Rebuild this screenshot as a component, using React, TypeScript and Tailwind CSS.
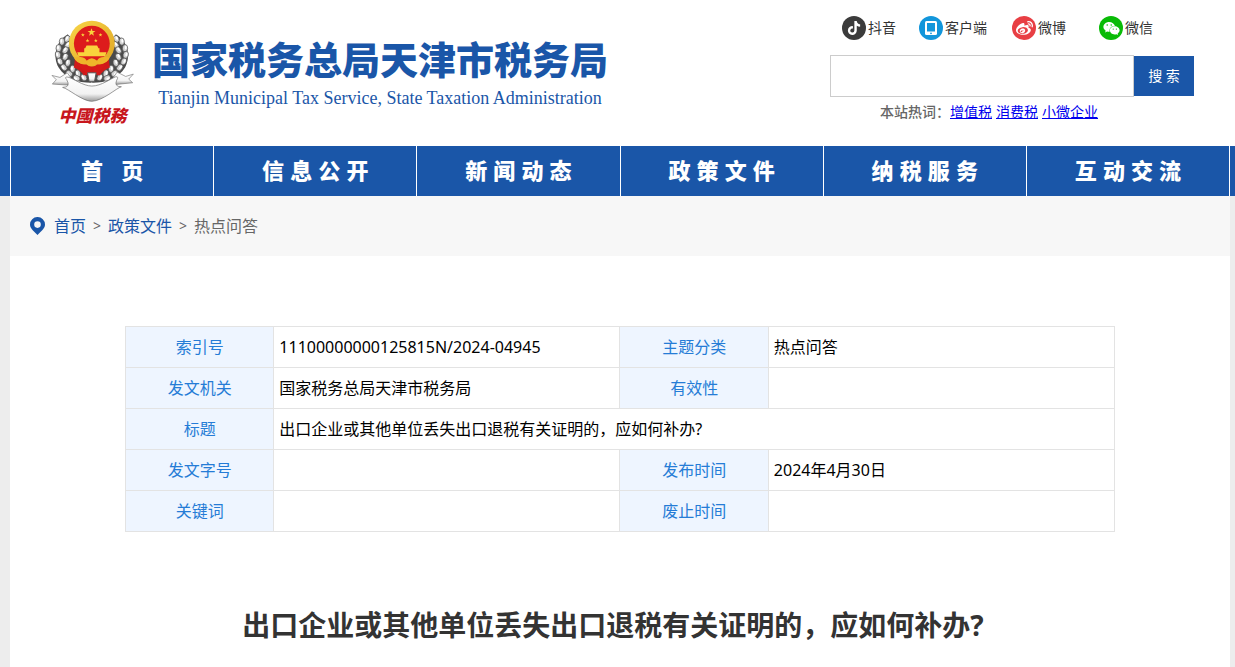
import type { ReactNode } from "react";
import { FaTiktok, FaWeibo, FaWeixin } from "react-icons/fa";

const NAV = ["首   页", "信 息 公 开", "新 闻 动 态", "政 策 文 件", "纳 税 服 务", "互 动 交 流"];

const HOT_WORDS = ["增值税", "消费税", "小微企业"];

function TabletIcon() {
    return (
        <svg viewBox="0 0 24 24" className="h-6 w-6" aria-hidden="true">
            <rect x="6" y="5" width="12" height="14" rx="1.5" fill="#fff" />
            <rect x="8" y="7" width="8" height="8.5" fill="#1296db" />
            <circle cx="12" cy="17.3" r="0.9" fill="#1296db" />
        </svg>
    );
}

function PinIcon() {
    return (
        <svg viewBox="0 0 15 18" className="h-[18px] w-[15px]" aria-hidden="true">
            <path
                fillRule="evenodd"
                d="M7.5 0A7.4 7.4 0 0 0 0 7.4C0 11 2.6 12.9 7.5 18 12.4 12.9 15 11 15 7.4A7.4 7.4 0 0 0 7.5 0ZM7.5 4.3A3.3 3.3 0 1 1 7.5 10.9 3.3 3.3 0 0 1 7.5 4.3Z"
                fill="#1a56a8"
            />
        </svg>
    );
}

const SOCIALS: { name: string; bg: string; icon: ReactNode }[] = [
    { name: "抖音", bg: "bg-[#3b3b3b]", icon: <FaTiktok className="h-3.5 w-3.5" /> },
    { name: "客户端", bg: "bg-[#1296db]", icon: <TabletIcon /> },
    { name: "微博", bg: "bg-[#e83f44]", icon: <FaWeibo className="h-[17px] w-[17px]" /> },
    { name: "微信", bg: "bg-[#09bb07]", icon: <FaWeixin className="h-[17px] w-[17px]" /> },
];

const STAR = "M0-10 2.4-3.2 9.5-3.1 3.8 1.2 5.9 8.1 0 4 -5.9 8.1 -3.8 1.2 -9.5-3.1 -2.4-3.2Z";

// leaves of the left half of the wreath: x, y, angle
const LEAVES = [
    [82, 90, 25], [66, 98, 5], [84, 108, 40], [56, 118, 0], [76, 124, 35], [54, 138, -12],
    [76, 144, 25], [60, 158, -25], [84, 162, 15], [72, 176, -38], [98, 180, 0], [88, 194, -50],
    [114, 194, -15], [110, 208, -60], [132, 206, -30],
];

function Wreath() {
    return (
        <g>
            <path d="M84 76C50 94 36 140 56 176C76 208 112 222 155 222V160L100 130Z" fill="#4a4a4a" />
            {LEAVES.map(([x, y, a]) => (
                <g key={`${x}-${y}`} transform={`translate(${x} ${y}) rotate(${a})`}>
                    <ellipse rx="8" ry="11" fill="#d2d2d2" stroke="#4a4a4a" strokeWidth="2" />
                    <ellipse cx="-2" cy="-2" rx="3" ry="6" fill="#fff" />
                </g>
            ))}
        </g>
    );
}

function Emblem() {
    return (
        <svg viewBox="33 33 250 250" className="h-[83px] w-[83px]" role="img" aria-label="税徽">
            <defs>
                <linearGradient id="silver" x1="0" y1="0" x2="0" y2="1">
                    <stop offset="0" stopColor="#ffffff" />
                    <stop offset="0.7" stopColor="#f2f2f2" />
                    <stop offset="1" stopColor="#9a9a9a" />
                </linearGradient>
                <linearGradient id="gold" x1="0" y1="0" x2="1" y2="1">
                    <stop offset="0" stopColor="#f8d648" />
                    <stop offset="1" stopColor="#dfa423" />
                </linearGradient>
            </defs>
            <Wreath />
            <g transform="translate(312 0) scale(-1 1)">
                <Wreath />
            </g>
            <path d="M106 142 102 176Q122 184 132 200L156 192 180 200Q190 184 210 176L206 142Z" fill="#cf1a1a" />
            <circle cx="156" cy="104" r="69" fill="url(#gold)" />
            <circle cx="156" cy="104" r="54" fill="#dd1c1c" />
            <g fill="#f9d33c">
                <path d={STAR} transform="translate(155 70) scale(1.25)" />
                <path d={STAR} transform="translate(129 78) scale(.6)" />
                <path d={STAR} transform="translate(182 78) scale(.6)" />
                <path d={STAR} transform="translate(143 95) scale(.6)" />
                <path d={STAR} transform="translate(168 95) scale(.6)" />
                <path d="M136 118 140 110H172L176 118ZM133 118H179V130H133ZM112 130H200L196 142H116Z" />
            </g>
            <path d="M102 146Q136 140 140 156 156 140 172 156 176 140 210 146 202 168 172 165 156 178 140 165 110 168 102 146Z" fill="#efb52a" />
            <path d="M112 166Q132 184 140 200L156 178 172 200Q180 184 200 166L172 167 156 178 140 167Z" fill="#d71919" />
            <path d="M143 192H169L164 219H148Z" fill="url(#silver)" stroke="#555" strokeWidth="3" />
            <path d="M36 200 60 206 82 192 98 214 84 229 37 226 49 213Z" fill="url(#silver)" stroke="#777" strokeWidth="2" />
            <path d="M281 196 258 203 232 190 216 213 229 227 279 222 267 211Z" fill="url(#silver)" stroke="#777" strokeWidth="2" />
            <path
                d="M68 236Q94 236 80 212 72 204 84 205C98 208 130 232 156 232C184 232 216 208 228 204Q238 203 231 214 222 234 245 234C230 238 190 276 156 278C126 277 86 240 68 236Z"
                fill="url(#silver)"
                stroke="#6b6b6b"
                strokeWidth="2"
            />
        </svg>
    );
}

function Header() {
    return (
        <header className="bg-white">
            <div className="flex h-[146px] items-start justify-between pl-[51px] pr-[41px]">
                <a href="#" className="flex items-start gap-[18px] text-[#1a56a8]">
                    <span className="flex flex-col items-center pt-5">
                        <Emblem />
                        <span className="text-[17px] font-black italic leading-[26px] text-[#c8161d]">中國税務</span>
                    </span>
                    <span className="flex flex-col items-center whitespace-nowrap pt-[33px]">
                        <span className="text-[38px] font-black leading-[52px]">国家税务总局天津市税务局</span>
                        <span className="font-['Liberation_Serif',serif] text-[18px] leading-[26px]">
                            Tianjin Municipal Tax Service, State Taxation Administration
                        </span>
                    </span>
                </a>

                <div className="w-[364px] pt-4 text-sm">
                    <ul className="grid grid-cols-[77px_93px_87px_auto] pl-3 text-[#333]">
                        {SOCIALS.map((item) => (
                            <li key={item.name}>
                                <a href="#" className="flex items-center gap-0.5 whitespace-nowrap leading-6">
                                    <span className={`flex h-6 w-6 items-center justify-center rounded-full text-white ${item.bg}`}>
                                        {item.icon}
                                    </span>
                                    {item.name}
                                </a>
                            </li>
                        ))}
                    </ul>
                    <form className="mt-[15px] flex items-center" onSubmit={(e) => e.preventDefault()}>
                        <input
                            type="text"
                            aria-label="搜索"
                            className="h-[42px] min-w-0 flex-1 border border-[#ccc] bg-white px-3 outline-none"
                        />
                        <button type="submit" className="h-10 w-[60px] bg-[#1a56a8] text-white">
                            搜 索
                        </button>
                    </form>
                    <p className="mt-[3px] flex gap-1 pl-[50px] leading-6">
                        <span className="-mr-1 font-medium text-[#666]">本站热词：</span>
                        {HOT_WORDS.map((word) => (
                            <a key={word} href="#" className="text-[#0000ee] underline">
                                {word}
                            </a>
                        ))}
                    </p>
                </div>
            </div>
        </header>
    );
}

function NavBar() {
    return (
        <nav className="bg-[#1a56a8] pl-2.5 pr-[5px]">
            <ul className="flex border-l border-white">
                {NAV.map((item) => (
                    <li key={item} className="flex-1 border-r border-white">
                        <a
                            href="#"
                            className="block h-[50px] whitespace-pre text-center font-['Liberation_Sans','Noto_Sans_CJK_SC',sans-serif] text-[22px] font-black leading-[52px] text-white"
                        >
                            {item}
                        </a>
                    </li>
                ))}
            </ul>
        </nav>
    );
}

function Breadcrumb() {
    return (
        <div className="flex h-[60px] items-center gap-[7px] bg-[#f7f7f7] pl-5 text-base text-[#666]">
            <span className="mr-0.5">
                <PinIcon />
            </span>
            <a href="#" className="text-[#1a56a8]">首页</a>
            <span className="text-sm">&gt;</span>
            <a href="#" className="text-[#1a56a8]">政策文件</a>
            <span className="text-sm">&gt;</span>
            <span>热点问答</span>
        </div>
    );
}

function Label({ children }: { children: ReactNode }) {
    return (
        <th scope="row" className="border border-[#e3e3e3] bg-[#eef5ff] font-normal text-[#257cd6]">
            {children}
        </th>
    );
}

function Value({ children, span }: { children?: ReactNode; span?: number }) {
    return (
        <td colSpan={span} className="border border-[#e3e3e3] px-[5px]">
            {children}
        </td>
    );
}

function InfoTable() {
    return (
        <table className="mx-auto w-full max-w-[990px] table-fixed border-collapse text-base leading-10 text-black">
            <colgroup>
                <col className="w-[15%]" />
                <col className="w-[35%]" />
                <col className="w-[15%]" />
                <col className="w-[35%]" />
            </colgroup>
            <tbody>
                <tr>
                    <Label>索引号</Label>
                    <Value>11100000000125815N/2024-04945</Value>
                    <Label>主题分类</Label>
                    <Value>热点问答</Value>
                </tr>
                <tr>
                    <Label>发文机关</Label>
                    <Value>国家税务总局天津市税务局</Value>
                    <Label>有效性</Label>
                    <Value />
                </tr>
                <tr>
                    <Label>标题</Label>
                    <Value span={3}>出口企业或其他单位丢失出口退税有关证明的，应如何补办?</Value>
                </tr>
                <tr>
                    <Label>发文字号</Label>
                    <Value />
                    <Label>发布时间</Label>
                    <Value>2024年4月30日</Value>
                </tr>
                <tr>
                    <Label>关键词</Label>
                    <Value />
                    <Label>废止时间</Label>
                    <Value />
                </tr>
            </tbody>
        </table>
    );
}

export default function App() {
    return (
        <div lang="zh-CN" className="flex min-h-screen flex-col bg-[#ededed] font-['Noto_Sans','Noto_Sans_CJK_SC',sans-serif]">
            <Header />
            <NavBar />
            <main className="ml-2.5 mr-[5px] flex-1 bg-white">
                <Breadcrumb />
                <article className="px-10 pt-[70px]">
                    <InfoTable />
                    <h1 className="pr-3.5 pt-[72px] text-center text-[28px] font-bold leading-[42px] text-[#333]">
                        出口企业或其他单位丢失出口退税有关证明的，应如何补办?
                    </h1>
                </article>
            </main>
        </div>
    );
}
